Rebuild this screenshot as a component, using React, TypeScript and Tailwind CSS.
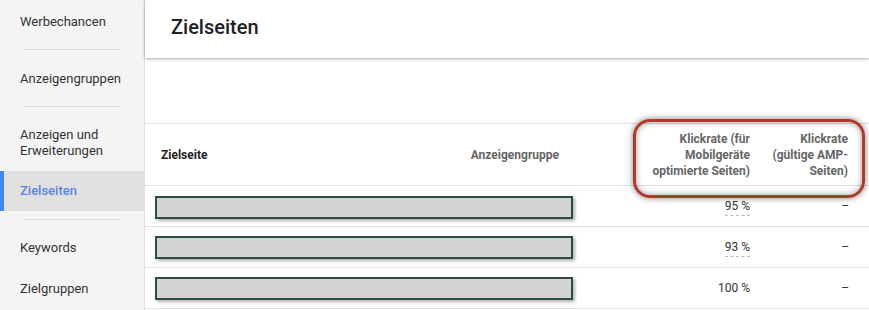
import React from 'react';

const rows = [
  { value: '95 %', dashed: true, shift: 'mt-[3px]' },
  { value: '93 %', dashed: true, shift: 'mt-0' },
  { value: '100 %', dashed: false, shift: 'mt-0' },
];

function Divider() {
  return <div className="mx-[24px] h-px w-[96px] bg-[#dadada]" />;
}

export default function App() {
  return (
    <div className="flex h-[310px] w-[869px] overflow-hidden bg-white font-['Roboto',sans-serif] text-[#333]">
      {/* Sidebar */}
      <nav className="flex w-[145px] shrink-0 flex-col border-r border-[#e0e0e0] bg-[#f4f4f4] text-[13px] leading-[18px]">
        <div className="h-[49px] pl-[20px] pt-[13px]">Werbechancen</div>
        <Divider />
        <div className="h-[56px] pl-[20px] pt-[20px]">Anzeigengruppen</div>
        <Divider />
        <div className="h-[64px] pl-[20px] pt-[20px] leading-[16px]">
          Anzeigen und
          <br />
          Erweiterungen
        </div>
        <div className="flex h-[40px] items-center bg-[#e0e0e0]">
          <div className="h-full w-[4px] bg-[#4285f4]" />
          <span className="pl-[16px] font-medium text-[#5a85e0]">Zielseiten</span>
        </div>
        <div className="mt-[8px]">
          <Divider />
        </div>
        <div className="h-[50px] pl-[20px] pt-[19px]">Keywords</div>
        <div className="pl-[20px] pt-[10px]">Zielgruppen</div>
      </nav>

      {/* Main */}
      <main className="relative flex flex-1 flex-col">
        <header className="relative z-10 flex h-[58px] items-center bg-white pl-[26px] shadow-[0_1px_3px_rgba(0,0,0,0.35)]">
          <h1 className="pb-[4px] text-[20px] font-medium text-[#202124]">Zielseiten</h1>
        </header>
        <div className="h-[65px]" />

        {/* Table header */}
        <div className="grid h-[63px] grid-cols-[285px_145px_191px_1fr] items-center border-y border-[#e0e0e0] text-[12px] font-bold leading-[16px] text-[#666]">
          <div className="pl-[16px] text-[#212121]">Zielseite</div>
          <div className="pr-[16px] text-right">Anzeigengruppe</div>
          <div className="pr-[16px] text-right">
            Klickrate (für
            <br />
            Mobilgeräte
            <br />
            optimierte Seiten)
          </div>
          <div className="pr-[21px] text-right">
            Klickrate
            <br />
            (gültige AMP-
            <br />
            Seiten)
          </div>
        </div>

        {/* Rows */}
        {rows.map((r, i) => (
          <div
            key={i}
            className="grid h-[41px] grid-cols-[430px_191px_1fr] items-center border-b border-[#e0e0e0] text-[12px]"
          >
            <div className={`ml-[10px] h-[23px] w-[418px] border-2 border-[#2e4a4a] bg-[#d4d4d4] shadow-[2px_2px_3px_rgba(0,0,0,0.3)] ${r.shift}`} />
            <div className="pr-[16px] text-right">
              <span className={r.dashed ? 'border-b border-dashed border-[#bbb] pb-[2px]' : ''}>{r.value}</span>
            </div>
            <div className="pr-[20px] text-right">–</div>
          </div>
        ))}

        {/* Highlight ring */}
        <div className="absolute left-[488px] top-[119px] h-[79px] w-[232px] rounded-[17px] border-[3px] border-[#ad3b28] shadow-[0_0_6px_rgba(0,0,0,0.5),inset_0_0_6px_rgba(0,0,0,0.4)]" />
      </main>
    </div>
  );
}
